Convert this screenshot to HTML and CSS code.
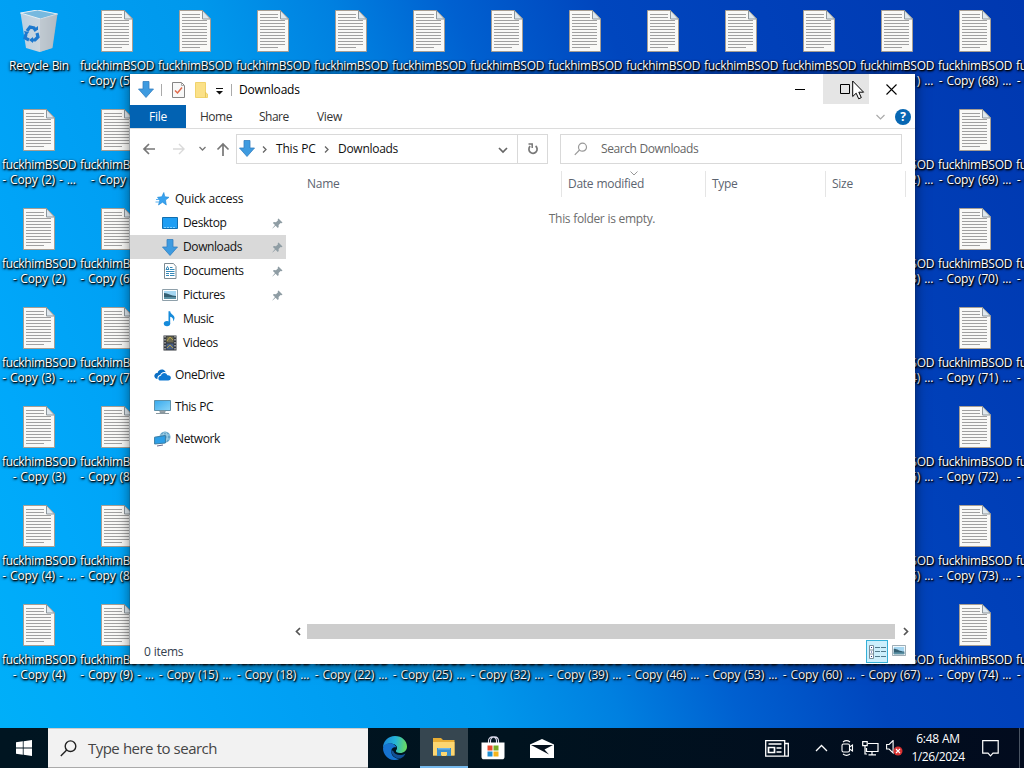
FILE: index.html
```html
<!DOCTYPE html>
<html lang="en">
<head>
<meta charset="utf-8">
<title>Downloads</title>
<link rel="stylesheet" href="styles.css">
</head>
<body>
<svg width="0" height="0" class="defs">
  <defs>
    <linearGradient id="edgeA" x1="0" y1=".4" x2="1" y2=".5"><stop offset="0" stop-color="#1b86d8"/><stop offset=".5" stop-color="#25b4d8"/><stop offset="1" stop-color="#6bdc5c"/></linearGradient>
    <linearGradient id="scr" x1="0" y1="0" x2="1" y2="1"><stop offset="0" stop-color="#36a9ee"/><stop offset="1" stop-color="#8bd5f8"/></linearGradient>
    <linearGradient id="binFill" x1="0" x2="1"><stop offset="0" stop-color="#b9d0e2"/><stop offset=".55" stop-color="#cdd6de"/><stop offset="1" stop-color="#a5afb8"/></linearGradient>
    <symbol id="doc" viewBox="0 0 32 42"><path d="M.5.5h23l8 8.500v32.500H.5z" fill="#f9f9f7" stroke="#a79e93"/><path d="M23.500.5v8.500h8z" fill="#dfe8ee" stroke="#8d969c"/><path d="M3 4.500h18M3 7.500h18M3 10.500h25M3 13.500h25M3 16.500h25M3 19.500h25M3 22.500h25M3 25.500h25M3 28.500h25M3 31.500h25M3 34.500h25M3 37.500h18" stroke="#a0a0a0"/></symbol>
    <symbol id="down" viewBox="0 0 16 17"><path d="M5 .5h6v7.500h4.500L8 16.500.5 8H5z" fill="#3e9be0" stroke="#327fc0" stroke-width=".8"/></symbol>
    <symbol id="pin" viewBox="0 0 11 11"><path d="M6.500.5l4 4-1 .8-.9-.2-2 2 .1 2-.9.900-2.200-2.300L.6 10.500.4 10.300 3 7.100.9 5l.9-.9 2.200.1 2-2-.3-.9z" fill="#8f9da4"/></symbol>
    <symbol id="pic" viewBox="0 0 16 12"><path d="M.5.5h15v11H.5z" fill="#fff" stroke="#8ea0aa"/><path d="M2 2h12v8H2z" fill="#a6d7f2"/><path d="M2 4c4 0 7 3 12 3v3H2z" fill="#345f72"/><path d="M2 8h12v2H2z" fill="#5b91a4"/></symbol>
  </defs>
</svg>

<div class="desktop" id="desktop"></div>

<div class="window">
  <header class="titlebar">
    <svg class="tb-down" width="16" height="17"><use href="#down"/></svg>
    <i class="sep s1"></i>
    <svg class="tb-check" width="13" height="16" viewBox="0 0 13 16"><path d="M.5.5h9l3 3v12H.5z" fill="#f8f8f8" stroke="#858585"/><path d="M9.500.5v3h3" fill="none" stroke="#aaa"/><path d="M3 8.500l2.500 2.500 4.500-5.500" fill="none" stroke="#e0694a" stroke-width="1.500"/></svg>
    <svg class="tb-folder" width="13" height="16" viewBox="0 0 13 16"><path d="M.5.5h10v10l2 1.500v3.500H.5z" fill="#fbe188" stroke="#f0d36c"/><path d="M10.500 10v5.500" stroke="#e6c75b"/></svg>
    <svg class="tb-menu" width="7" height="7" viewBox="0 0 7 7"><path d="M0 .5h7" stroke="#111"/><path d="M0 3h7L3.500 6.500z" fill="#111"/></svg>
    <i class="sep s2"></i>
    <span class="title">Downloads</span>
    <div class="winbtns">
      <span><svg width="11" height="11"><path d="M0 5.500h10" stroke="#000"/></svg></span>
      <span class="hover"><svg width="11" height="11"><path d="M.5.5h9v9h-9z" fill="none" stroke="#000"/></svg></span>
      <span><svg width="11" height="11"><path d="M.5.5l10 10M10.500.5l-10 10" stroke="#000" stroke-width="1.100"/></svg></span>
    </div>
  </header>
  <nav class="tabs">
    <span class="tab file">File</span><span class="tab home">Home</span><span class="tab share">Share</span><span class="tab view">View</span>
    <div class="tabs-right">
      <svg width="9" height="6"><path d="M.5 1l4 4 4-4" fill="none" stroke="#aaa" stroke-width="1.200"/></svg>
      <b class="help">?</b>
    </div>
  </nav>
  <div class="addressbar">
    <svg class="navarrows" width="106" height="36" viewBox="0 0 106 36">
      <g fill="none" stroke="#777" stroke-width="1.700"><path d="M25 18H14M19 13l-5 5 5 5"/><path d="M43 18h11M49 13l5 5-5 5" stroke="#d9d9d9" stroke-width="1.400"/><path d="M69.500 16l3 3 3-3" stroke-width="1.300"/><path d="M93 25V14M87.500 18.500L93 13l5.500 5.500"/></g>
    </svg>
    <div class="path">
      <svg width="16" height="17"><use href="#down"/></svg>
      <svg class="crumb c1" width="5" height="7"><path d="M1 .5l3 3-3 3" fill="none" stroke="#666" stroke-width="1.300"/></svg>
      <span class="p1">This PC</span>
      <svg class="crumb c2" width="5" height="7"><path d="M1 .5l3 3-3 3" fill="none" stroke="#666" stroke-width="1.300"/></svg>
      <span class="p2">Downloads</span>
      <svg class="drop" width="10" height="7"><path d="M1 1l4 4 4-4" fill="none" stroke="#666" stroke-width="1.700"/></svg>
      <div class="refresh"><svg width="12" height="12" viewBox="0 0 12 12"><path d="M3.200 3.200A4.100 4.100 0 1 0 8.600 3" fill="none" stroke="#777" stroke-width="1.700"/><path d="M1.500 1h3.700v4" fill="none" stroke="#777" stroke-width="1.500"/></svg></div>
    </div>
    <div class="search">
      <svg width="14" height="14" viewBox="0 0 14 14"><g fill="none" stroke="#999" stroke-width="1.200"><circle cx="8.500" cy="5.200" r="4"/><path d="M5.500 8L.8 12.800"/></g></svg>
      <span>Search Downloads</span>
    </div>
  </div>
  <div class="body">
    <aside class="tree">
      <div class="row top"><svg class="ic" width="16" height="16" viewBox="0 0 16 16"><path d="M9.800 1.500l1 4.200 4.200.6-3.500 2.700.8 5-3.800-2.800L4.500 14l1.200-4.500L3.500 6.300l4.300-.6z" fill="#38a2ef" stroke="#1b87d5" stroke-width=".6"/><path d="M2 8.500h3M1.500 11h3.500" stroke="#5bb2f0"/></svg><span>Quick access</span></div>
      <div class="row sub"><svg class="ic" width="16" height="16" viewBox="0 0 16 16"><path d="M.5 2.500h15v11H.5z" fill="#1e9ef4" stroke="#126eae"/><path d="M2 12.500h12" stroke="#7ed0ff" stroke-dasharray="2 1"/></svg><span>Desktop</span><svg class="pin" width="11" height="11"><use href="#pin"/></svg></div>
      <div class="row sub sel"><svg class="ic" width="16" height="17"><use href="#down"/></svg><span>Downloads</span><svg class="pin" width="11" height="11"><use href="#pin"/></svg></div>
      <div class="row sub"><svg class="ic" width="16" height="16" viewBox="0 0 16 16"><path d="M2.500.5h9l2.500 3v12H2.500z" fill="#fff" stroke="#7c8a92"/><path d="M4 8.500h8.500M4 10.500h3M8 10.500h4.500M4 12.500h3M8 12.500h4.500M8 6.500h4.500M8 4.500h2.500" stroke="#3588b7"/><path d="M4 6.500l1.500-3 1.500 3z" fill="none" stroke="#3588b7"/></svg><span>Documents</span><svg class="pin" width="11" height="11"><use href="#pin"/></svg></div>
      <div class="row sub"><svg class="ic" width="16" height="12"><use href="#pic"/></svg><span>Pictures</span><svg class="pin" width="11" height="11"><use href="#pin"/></svg></div>
      <div class="row sub"><svg class="ic" width="16" height="16" viewBox="0 0 16 16"><ellipse cx="5" cy="12.600" rx="3.200" ry="2.700" fill="#168bdb"/><path d="M6.500.2h1.700c.1 3 4.800 3.800 4.300 7-.2 1.500-.9 2.500-1.500 3 .7-2.600-.6-4-2.800-4.500v7H6.500z" fill="#168bdb"/></svg><span>Music</span></div>
      <div class="row sub"><svg class="ic" width="16" height="16" viewBox="0 0 16 16"><path d="M1.500.5h13v15h-13z" fill="#33373c"/><path d="M4.500 1.500h7v6h-7z" fill="#6d6b52"/><path d="M4.500 8.500h7v6h-7z" fill="#4b6186"/><path d="M5 6l3-4 3 3M5 13l3-3 3 3" stroke="#b6a348" fill="none"/><path d="M3 1v14M13 1v14" stroke="#e9e9e9" stroke-dasharray="1.500 1.500"/></svg><span>Videos</span></div>
      <div class="row top gap"><svg class="ic wide" width="17" height="12" viewBox="0 0 17 12"><path d="M3.500 10C1 10-.5 7.500.8 5.500 1.500 4.200 2.800 3.900 3.600 4 4 1.500 7-.3 9.800 1c1 .6 1.600 1.300 1.900 2.200-3-.9-5 1-5.400 2.500C4 6.300 3.200 8 3.500 10z" fill="#0b6fc4"/><path d="M6.500 11.500c-2.900 0-3-4.300.5-4.700.6-3.300 5.200-3.700 6.300-.6 2.500-.3 3.900 1.300 3.500 3.100-.3 1.500-1.300 2.200-2.500 2.200z" fill="#0f79d2"/></svg><span>OneDrive</span></div>
      <div class="row top gap"><svg class="ic wide" width="17" height="15" viewBox="0 0 17 15"><path d="M.5.500h16v10H.5z" fill="url(#scr)" stroke="#5f90a8"/><path d="M6 11h5v1.500H6zM2 13.500h13" fill="#aaa" stroke="#8a989f"/></svg><span>This PC</span></div>
      <div class="row top gap"><svg class="ic wide" width="17" height="16" viewBox="0 0 17 16"><circle cx="11" cy="6" r="5.500" fill="#65a5c9"/><path d="M11 .5c-3 3-3 8 0 11M11 .5c3 3 3 8 0 11M6 4h10M6 8h10" stroke="#b2dced" fill="none" stroke-width=".8"/><path d="M.6 6.200l10.800-1.700v7.500L.6 13z" fill="#2d9fe7" stroke="#397ca4"/><path d="M3 15l6-1" stroke="#668"/></svg><span>Network</span></div>
    </aside>
    <main class="list">
      <div class="cols">
        <span class="col name">Name</span>
        <span class="col date">Date modified<svg class="sort" width="8" height="5"><path d="M.5.5L4 4 7.500.5" fill="none" stroke="#999"/></svg></span>
        <span class="col type">Type</span>
        <span class="col size">Size</span>
      </div>
      <p class="empty">This folder is empty.</p>
      <div class="scroll">
        <span class="sb"><svg width="6" height="9"><path d="M5 1L1.500 4.500 5 8" fill="none" stroke="#555" stroke-width="1.700"/></svg></span>
        <i class="thumb"></i>
        <span class="sb right"><svg width="6" height="9"><path d="M1 1l3.500 3.500L1 8" fill="none" stroke="#555" stroke-width="1.700"/></svg></span>
      </div>
    </main>
  </div>
  <footer class="status">
    <span class="items">0 items</span>
    <span class="details"><svg width="17" height="14" viewBox="0 0 17 14"><path d="M.5.5h4v13h-4zM.5 5h4M.5 9h4" fill="#fff" stroke="#7b8e9b"/><path d="M6 2.500h5M12 2.500h5M6 6.500h5M12 6.500h5M6 11.500h5M12 11.500h5" stroke="#527a8b"/><path d="M2 2.500h1M2 7h1M2 11.500h1" stroke="#238"/></svg></span>
    <svg class="thumbs" width="14" height="11" viewBox="0 0 16 12" preserveAspectRatio="none"><use href="#pic" width="16" height="12"/></svg>
  </footer>
</div>

<div class="taskbar">
  <span class="start"><svg width="16" height="16" viewBox="0 0 16 16"><path d="M0 2.300l6.800-1v6.300H0zM7.600 1.200L16 0v7.600H7.600zM0 8.400h6.800v6.300l-6.800-1zM7.600 8.400H16V16l-8.400-1.200z" fill="#fff"/></svg></span>
  <div class="tsearch"><svg width="17" height="17" viewBox="0 0 17 17"><g fill="none" stroke="#222" stroke-width="1.400"><circle cx="10.500" cy="6.200" r="5.300"/><path d="M6.700 10L.8 16"/></g></svg><span>Type here to search</span></div>
  <span class="app edge"><svg width="24" height="24" viewBox="0 0 24 24"><path d="M0 12C0 5 5 0 12 0c7 0 12 5 12 10.500 0 4-3 6.500-7 6.500-3 0-4.500-1-4-2.500 1.500-1.500 1.500-4-.5-5.500C8 6 2 7.500 0 12z" fill="url(#edgeA)"/><path d="M0 12C1 8 5 6.500 9 7.500c2.500.6 4 2.500 4.300 4-1.300-.8-5-.5-5 4C8.300 20 12 22.500 16.500 23 8 26.500 0 20.500 0 12z" fill="#1673d0"/><path d="M8.300 14c-.3 5 4 8.500 9.200 8.600 2.500-1.200 4.200-3 5-5.100-5 3-11 1.500-12.200-2.500z" fill="#124f94"/></svg></span>
  <span class="app active"><svg width="22" height="18" viewBox="0 0 22 18"><path d="M0 0h8l2 2h11.500v15.500H0z" fill="#e9ae35"/><path d="M0 4h21.500v13.500H0z" fill="#fcd671"/><path d="M4 10h14v8h-4v-4H8v4H4z" fill="#3a8dcc"/><path d="M5 10h12v1.500H5z" fill="#6cb5e9"/><path d="M9 14.500h4V18H9z" fill="#fcd671"/></svg></span>
  <span class="app store"><svg width="24" height="24" viewBox="0 0 24 24"><path d="M7.500 8V5c0-5.500 8-5.500 8 0v3M9.500 8V5c0-5.500 8-5.500 8 0v3" fill="none" stroke="#dde" stroke-width="1.100"/><path d="M.5 6.500h23V21c0 1.500-1 2.300-2.300 2.300H2.800C1.500 23.300.5 22.500.5 21z" fill="#fff"/><path d="M6.500 9.500h5v5h-5z" fill="#e8492e"/><path d="M12.500 9.500h5v5h-5z" fill="#7aad27"/><path d="M6.500 15.500h5v5h-5z" fill="#1e8fd3"/><path d="M12.500 15.500h5v5h-5z" fill="#f5b41b"/></svg></span>
  <span class="app mail"><svg width="24" height="19" viewBox="0 0 24 19"><path d="M0 5.500L12 0l12 5.500V19H0z" fill="#fff"/><path d="M1 6h22l-8.500 4.500 4.500 5-7.500-4z" fill="#05111d"/></svg></span>
  <div class="tray">
    <svg width="24" height="17" viewBox="0 0 24 17"><g fill="none" stroke="#fff" stroke-width="1.300"><path d="M.7.7h19v15.500h-19zM20 3.500h3.300v12.700H19"/><path d="M3.500 4h13M3.500 7.500h6v5h-6zM11.500 8h5M11.500 12h5" stroke-width="1.700"/></g></svg>
    <svg class="up" width="13" height="8"><path d="M1 7l5.500-5.500L12 7" fill="none" stroke="#fff" stroke-width="1.300"/></svg>
    <svg class="cam" width="13" height="16" viewBox="0 0 13 16"><g fill="none" stroke="#fff" stroke-width="1.100"><rect x="1" y="4" width="7.500" height="8" rx="1.500"/><path d="M8.500 7l3-2v6l-3-2M2 2c2-1.500 5-1.500 7 0M2 14c2 1.500 5 1.500 7 0"/></g></svg>
    <svg class="net" width="17" height="15" viewBox="0 0 17 15"><g fill="none" stroke="#fff" stroke-width="1.200"><path d="M6 2.500h10v8H4.500V7M10 10.500v3M6.500 13.800h7.500M.7.700h4.500v4H.7zM3 5v8h2"/></g></svg>
    <svg class="vol" width="17" height="16" viewBox="0 0 17 16"><path d="M.6 4.500h2.500l4-4v12.500l-4-4H.6z" fill="none" stroke="#fff" stroke-width="1.100"/><circle cx="12" cy="11" r="4.500" fill="#d83232"/><path d="M10 9l4 4m0-4l-4 4" stroke="#fff" stroke-width="1.100"/></svg>
    <div class="clock"><span>6:48 AM</span><span class="day">1/26/2024</span></div>
    <svg class="note" width="17" height="17" viewBox="0 0 17 17"><path d="M.7.700h15.500v12.500H11l-2.500 2.600L6 13.200H.7z" fill="none" stroke="#fff" stroke-width="1.200"/></svg>
    <i class="peek"></i>
  </div>
</div>

<svg class="cursor" width="13" height="20" viewBox="0 0 13 20"><path d="M.7 1v15.500l3.500-3.300 2.500 5.600 2.600-1.200-2.500-5.400h4.800z" fill="#fff" stroke="#000"/></svg>
<script src="desktop.js"></script>
</body>
</html>
```
FILE: desktop.js
```js
const columns = [
  ['', '(2) - ...', '(2)', '(3) - ...', '(3)', '(4) - ...', '(4)'],
  ['(5) - ...', '(5)', '(6) - ...', '(7) - ...', '(8) - ...', '(8) - ...', '(9) - ...']
];
const lastInColumn = [15, 18, 22, 25, 32, 39, 46, 53, 60, 67, 74, 81];
for (const last of lastInColumn) {
  columns.push([6, 5, 4, 3, 2, 1, 0].map(n => `(${last - n}) ...`));
}
const bin = `<svg width="40" height="42" viewBox="0 0 40 42"><path d="M1.500 3l17-3 20 4-5 34-13 4L7 38z" fill="url(#binFill)"/><path d="M1.500 3l17-3 20 4-17 5z" fill="#77b9df" stroke="#e5eef4"/><path d="M21 9l17-5-5 34-12 4z" fill="#b8c2ca" opacity=".65"/><g fill="none" stroke="#1c78ce" stroke-width="3.200"><path d="M8 21l3-4 4 1 2 3M18 23l1 4-3 3h-3M10 30l-4-2 1-4"/></g><path d="M14 20h5v-4zM14 27v6l-4-3zM5 21l5 1-3 4z" fill="#1c78ce"/></svg>`;
const doc = '<svg width="32" height="42"><use href="#doc"/></svg>';
document.getElementById('desktop').innerHTML = columns.map(col =>
  '<div class="dcol">' + col.map(n =>
    n ? `<div class="ditem">${doc}<span>fuckhimBSOD</span><span class="copy">- Copy ${n}</span></div>`
      : `<div class="ditem">${bin}<span>Recycle Bin</span></div>`
  ).join('') + '</div>').join('');
```
FILE: styles.css
```css
* { box-sizing: border-box; }
body { margin: 0; width: 1024px; height: 768px; overflow: hidden; position: relative; font: 12px/16px "Open Sans", "Noto Sans", sans-serif; letter-spacing: -0.28px; word-spacing: .3px; color: #222; background: linear-gradient(68deg, #00b0f8 0%, #00a8fa 12%, #00a0f4 24%, #0098ec 38%, #0080e0 48%, #0060d0 57%, #0046be 68%, #0040b9 80%, #0038b0 100%); }
svg { display: block; flex: none; }
.defs { position: absolute; }
.desktop { display: flex; height: 728px; overflow: hidden; }
.dcol { flex: 0 0 78px; }
.ditem { height: 99px; padding-top: 10px; display: flex; flex-direction: column; align-items: center; color: #fff; line-height: 15px; white-space: nowrap; text-shadow: 1px 1px 2px #000, 0 1px 3px #000, 1px 1px 1px rgba(0,0,0,.7); }
.ditem svg { margin-bottom: 6px; }
.copy { letter-spacing: -.15px; word-spacing: 1px; }
.window { position: absolute; left: 130px; top: 74px; width: 785px; height: 590px; background: #fff; box-shadow: 0 0 1px #234, 0 3px 12px rgba(0,0,0,.5); display: flex; flex-direction: column; }
.titlebar { height: 31px; display: flex; align-items: center; padding-left: 8px; flex: none; }
.sep { width: 1px; height: 12px; background: #aaa; }
.s1 { margin-left: 7px; }
.tb-check { margin-left: 10px; }
.tb-folder { margin-left: 10px; }
.tb-menu { margin: 3px 0 0 8px; }
.s2 { margin-left: 8px; }
.title { margin-left: 7px; color: #000; letter-spacing: -.2px; }
.winbtns { display: flex; margin-left: auto; margin-right: 1px; align-self: flex-start; }
.winbtns span { width: 45.500px; height: 30px; display: flex; align-items: center; justify-content: center; }
.winbtns .hover { background: #e5e5e5; }
.tabs { height: 24px; flex: none; display: flex; border-bottom: 1px solid #dcdcdc; line-height: 24px; color: #333; }
.file { width: 56px; text-align: center; background: #0262b2; color: #fff; }
.home { margin-left: 14px; width: 59px; letter-spacing: -.5px; }
.share { width: 58px; letter-spacing: -.5px; }
.tabs-right { display: flex; align-items: center; gap: 10px; margin: 0 4px 0 auto; }
.help { width: 16px; height: 16px; border-radius: 50%; background: #0767b3; color: #fff; line-height: 16px; text-align: center; font-size: 12px; }
.addressbar { height: 40px; flex: none; display: flex; padding-top: 5px; }
.navarrows { margin-top: -3px; }
.path { width: 312px; height: 30px; border: 1px solid #d9d9d9; display: flex; align-items: center; padding-left: 2px; color: #111; }
.path > svg:first-child { margin-top: -1px; }
.c1 { margin-left: 7px; }
.p1 { width: 40px; margin-left: 9px; letter-spacing: -.2px; white-space: nowrap; }
.c2 { margin-left: 8px; }
.p2 { margin-left: 9px; }
.drop { margin-left: auto; margin-right: 9px; margin-top: 3px; }
.refresh { width: 30px; height: 28px; border-left: 1px solid #d9d9d9; display: flex; align-items: center; justify-content: center; }
.search { width: 342px; height: 30px; margin-left: 12px; border: 1px solid #d9d9d9; display: flex; align-items: center; padding-left: 13px; gap: 13px; color: #666; letter-spacing: -.42px; }
.body { flex: 1; display: flex; min-height: 0; }
.tree { width: 160px; padding-top: 18px; color: #111; }
.row { height: 24px; display: flex; align-items: center; position: relative; }
.sub span { letter-spacing: -.4px; }
.top { padding-left: 24px; }
.sub { padding-left: 32px; width: 156px; }
.ic { margin-right: 5px; }
.top .wide { margin-right: 4px; }
.gap { margin-top: 8px; }
.gap span { letter-spacing: -.4px; }
.sel { background: #d9d9d9; }
.pin { margin-left: auto; margin-right: 3px; }
.list { flex: 1; display: flex; flex-direction: column; }
.cols { height: 28px; display: flex; padding-top: 2px; color: #5c6470; line-height: 26px; }
.col { border-right: 1px solid #e5e5e5; height: 26px; position: relative; }
.name { width: 272px; padding-left: 17px; }
.date { width: 144px; padding-left: 6px; }
.type { width: 120px; padding-left: 6px; }
.size { width: 80px; padding-left: 6px; }
.sort { position: absolute; left: 68px; top: 0; }
.empty { margin: 14px 0 0; padding-right: 1px; text-align: center; color: #6d6d6d; letter-spacing: -.35px; }
.scroll { display: flex; height: 15px; margin-top: auto; }
.sb { width: 17px; padding-right: 2px; display: flex; align-items: center; justify-content: center; }
.sb.right { width: 20px; padding: 0 0 0 2px; }
.thumb { flex: 1; background: #cdcdcd; }
.status { height: 25px; flex: none; display: flex; align-items: center; padding: 0 9px 0 14px; color: #34404e; }
.details { margin-left: auto; width: 22px; height: 23px; background: #cdeffc; border: 1px solid #35b0d8; display: flex; align-items: center; justify-content: center; }
.thumbs { margin-left: 4px; margin-top: -2px; }
.taskbar { height: 40px; display: flex; background: linear-gradient(90deg, #001521, #00131f 50%, #020b1e); }
.start { width: 48px; display: flex; align-items: center; justify-content: center; }
.tsearch { width: 320px; background: #f2f2f2; display: flex; align-items: center; padding-left: 12px; gap: 11px; font-size: 15px; letter-spacing: -.53px; color: #454545; border-bottom: 1px solid #aaa; border-top: 1px solid #ccc; }
.app { width: 48px; display: flex; align-items: center; justify-content: center; margin-right: 1px; }
.edge { margin: 0 -1px 0 3px; }
.active { background: #364650; border-bottom: 2px solid #76b9ed; margin-left: 2px; margin-right: 1px; }
.tray { margin-left: auto; display: flex; align-items: center; color: #fff; }
.up { margin-left: 26px; }
.cam { margin-left: 13px; }
.net { margin-left: 8px; }
.vol { margin-left: 7px; }
.clock { width: 54px; margin-left: 8px; display: flex; flex-direction: column; align-items: center; line-height: 18px; white-space: nowrap; }
.day { letter-spacing: -.4px; }
.note { margin-left: 17px; }
.peek { width: 1px; height: 40px; margin-left: 20px; margin-right: 4px; background: #4a5463; }
.cursor { position: absolute; left: 852px; top: 80px; }
```
